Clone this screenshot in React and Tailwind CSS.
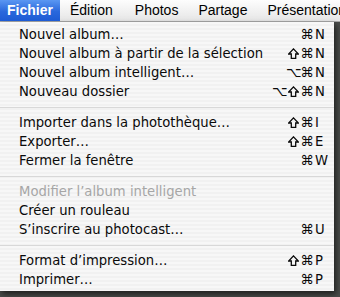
import React from "react";

const groups = [
  [
    ["Nouvel album…", "⌘", "N"],
    ["Nouvel album à partir de la sélection", "⇧⌘", "N"],
    ["Nouvel album intelligent…", "⌥⌘", "N"],
    ["Nouveau dossier", "⌥⇧⌘", "N"],
  ],
  [
    ["Importer dans la photothèque…", "⇧⌘", "I"],
    ["Exporter…", "⇧⌘", "E"],
    ["Fermer la fenêtre", "⌘", "W"],
  ],
  [
    ["Modifier l’album intelligent", "", "", true],
    ["Créer un rouleau", "", ""],
    ["S’inscrire au photocast…", "⌘", "U"],
  ],
  [
    ["Format d’impression…", "⇧⌘", "P"],
    ["Imprimer…", "⌘", "P"],
  ],
];

function Mod({ c }) {
  if (c === "⇧") {
    return (
      <span className="flex w-[14px] items-center justify-center" aria-label="⇧">
        <svg width="11" height="11" viewBox="0 0 11 11">
          <polygon
            points="5.5,0.9 10.3,6 7.7,6 7.7,10.3 3.3,10.3 3.3,6 0.7,6"
            fill="none"
            stroke="#0a0a0a"
            strokeWidth="1.3"
            strokeLinejoin="miter"
          />
        </svg>
      </span>
    );
  }
  return <span className="w-[14px] text-center text-[13.5px] leading-none">{c}</span>;
}

function Row({ label, mods, key1, disabled }) {
  return (
    <div className={`flex h-[19px] items-center pl-[19px] ${disabled ? "text-[#a6a6a6]" : "text-[#0a0a0a]"}`}>
      <span className="flex-1 whitespace-nowrap">{label}</span>
      <span className="flex items-center justify-end">
        {mods.split("").map((c, i) => (
          <Mod key={i} c={c} />
        ))}
      </span>
      <span className="w-[20px] pl-[1px] text-left">{key1}</span>
    </div>
  );
}

export default function App() {
  return (
    <div
      className="relative h-[297px] w-[340px] overflow-hidden bg-[#4a4c4a]"
      style={{ fontFamily: '"DejaVu Sans", "Liberation Sans", sans-serif' }}
    >
      <div
        className="flex h-[22px] items-center overflow-hidden border-b border-[#a9a9a9] bg-[linear-gradient(#fdfdfd,#e6e6e6)] text-[14px] text-black"
        style={{ fontFamily: '"Liberation Sans", Arial, sans-serif' }}
      >
        <div className="flex h-full w-[60px] shrink-0 items-center bg-[linear-gradient(#5a97f2,#2a68dc_55%,#1d5bd4)] pl-[7px] font-bold text-white">Fichier</div>
        <div className="shrink-0 pl-[10px]">Édition</div>
        <div className="shrink-0 pl-[22px]">Photos</div>
        <div className="shrink-0 pl-[20px]">Partage</div>
        <div className="shrink-0 whitespace-nowrap pl-[20px]">Présentation</div>
      </div>
      <div className="w-[334px] bg-[repeating-linear-gradient(#f7f7f7_0px,#f7f7f7_2px,#f1f1f1_2px,#f1f1f1_4px)] pb-[2px] pt-[3px] text-[13.2px] shadow-[2px_3px_6px_rgba(0,0,0,0.6)]">
        {groups.map((g, gi) => (
          <div key={gi}>
            {gi > 0 && (
              <div className="flex h-[12px] items-center">
                <div className="h-px w-full bg-[#d8d8d8]" />
              </div>
            )}
            {g.map((r, ri) => (
              <Row key={ri} label={r[0]} mods={r[1]} key1={r[2]} disabled={r[3]} />
            ))}
          </div>
        ))}
      </div>
    </div>
  );
}
